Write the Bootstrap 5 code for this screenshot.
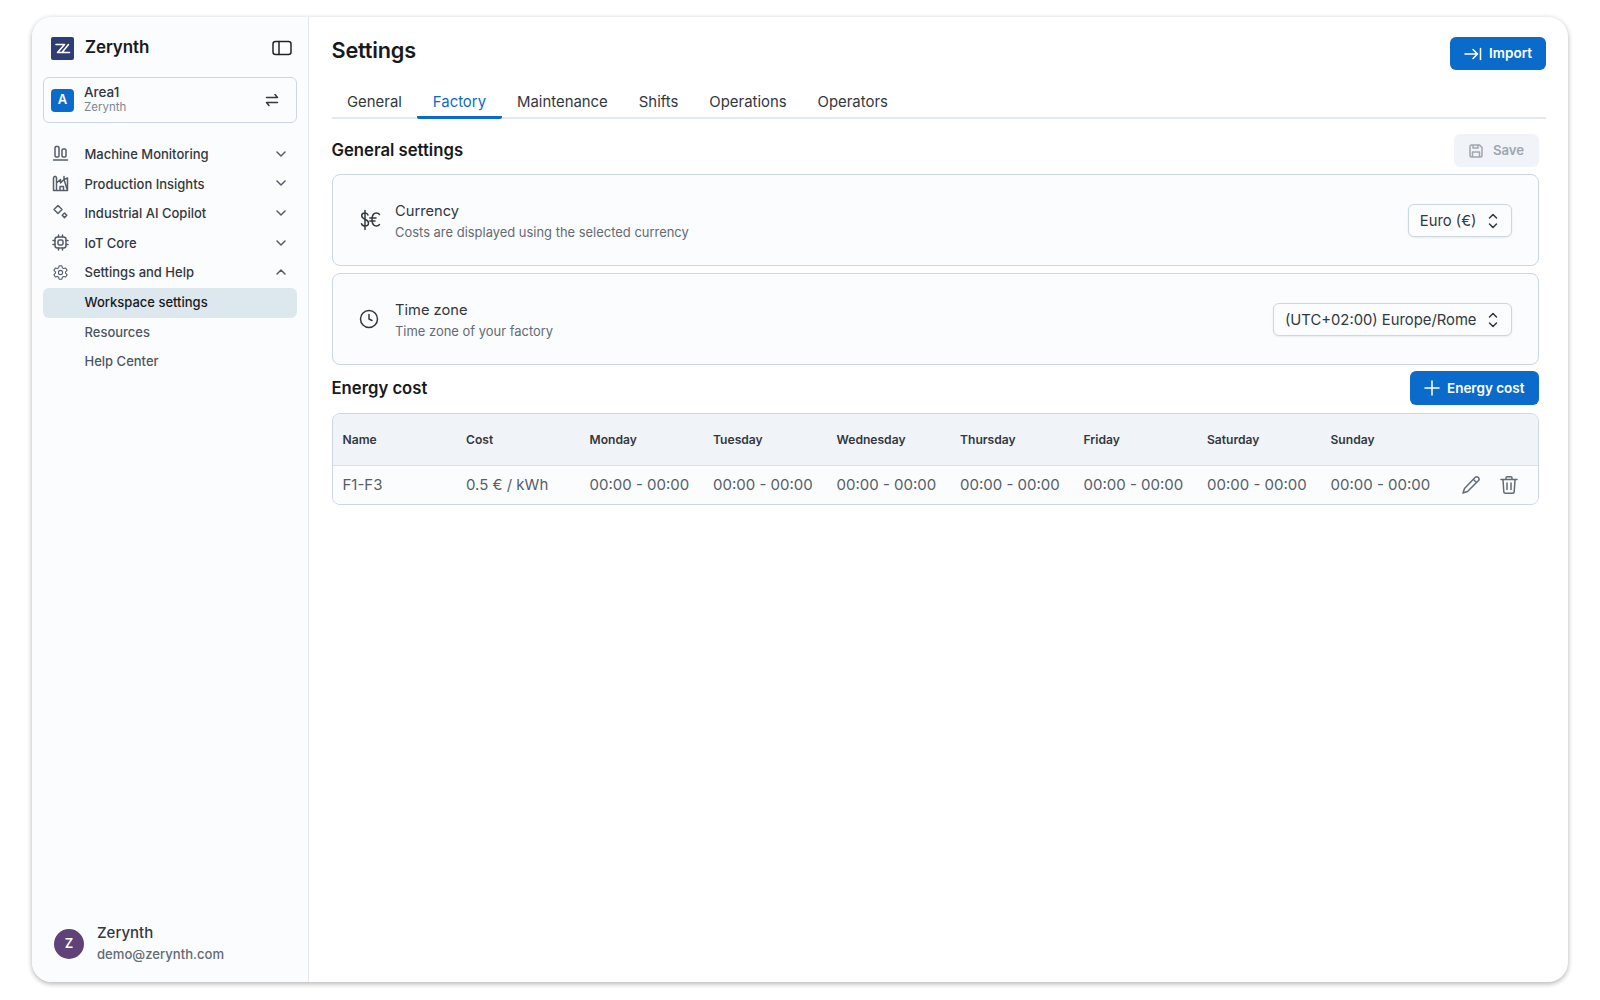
<!DOCTYPE html>
<html lang="en"><head><meta charset="utf-8"><title>Settings</title>
<link href="https://cdn.jsdelivr.net/npm/bootstrap@5.3.0/dist/css/bootstrap.min.css" rel="stylesheet">
<style>
html,body{height:100%;overflow:hidden}
body{background:#fff;font-family:Inter,"Liberation Sans",sans-serif;color:#32383e;padding:17px 32px 18px}
svg{display:block;flex:none;fill:none;stroke:currentColor;stroke-width:1.5;stroke-linecap:round;stroke-linejoin:round}
.app-frame{height:965px;border-radius:20px;box-shadow:0 2px 5px rgba(21,21,21,.28),0 0 6px rgba(21,21,21,.06);overflow:hidden;background:#fff}
.side-pane{width:277px;flex:none;background:#fbfcfe;border-right:1px solid #e4e9f0;padding:20px 11px 18px}
.brand-name{font-size:17px;font-weight:600;color:#171a1c;letter-spacing:-.1px}
.brand-row{height:22px;padding:0 5px 0 8px;margin-bottom:18px}
.brand-row .brand-name{margin-left:11px}
.area-box{height:46px;border:1px solid #cdd7e1;border-radius:6px;padding:0 17px 0 7px;margin-bottom:17px;background:#fbfcfe}
.area-mark{width:23px;height:23px;border-radius:4px;background:#0b6bcb;color:#fff;font-size:13px;font-weight:600}
.area-text{margin-left:10px}
.area-name{font-size:13.500px;line-height:15px;color:#32383e;font-weight:500;margin-top:-2px}
.area-sub{font-size:11.500px;line-height:14px;color:#7b8794}
.menu-row{height:29.600px;padding:0 11px 0 9px;font-size:13px;font-weight:500;color:#32383e;border-radius:6px;gap:15.500px;text-decoration:none}
.menu-row .menu-label{flex:1}
.menu-row svg{color:#555e68;margin-top:-2px}
.menu-sub{padding-left:41.500px;color:#4d5762}
.menu-on{background:#dde7ee;color:#171a1c}
.user-row{padding:0 11px;gap:13px}
.user-mark{width:30px;height:30px;border-radius:50%;background:#5f4278;color:#fff;font-size:13px;font-weight:600}
.user-name{font-size:15px;font-weight:500;line-height:20px;color:#32383e;margin-bottom:1px}
.user-mail{font-size:13.100px;font-weight:500;line-height:20px;color:#636b74}
.main-pane{padding:19px 22px 0 22.500px}
.page-title{font-size:21.700px;font-weight:600;color:#171a1c;margin:0 0 6px;letter-spacing:-.2px}
.head-row{height:34px;margin-bottom:14px}
.btn.btn-fill{background:#0b6bcb;border:0;color:#fff;font-size:13.500px;font-weight:600;border-radius:6px;height:33.500px;padding:0 14px;gap:7px}
.head-row .btn-fill{margin-top:1px}
.nav.nav-tabs.tab-strip{border-bottom:2px solid #e4e9f0;height:34.500px;gap:0}
.tab-strip .nav-link{border:0;color:#32383e;font-size:14.900px;padding:7px 15.500px 5px;height:34.500px;background:none;margin:0;border-radius:0;line-height:22px}
.tab-strip .nav-link.active{color:#0b6bcb;background:none;border-bottom:3px solid #0b6bcb;border-radius:2px}
.body-col{padding-right:7.500px}
.sec-title{font-size:16.700px;font-weight:600;color:#171a1c;margin:0}
.sec-row-a{height:33px;margin-top:15px;margin-bottom:7px}
.btn.btn-mute{background:#f0f4f8;border:0;color:#9fa6ad;font-size:13.200px;font-weight:600;height:33px;width:85px;border-radius:6px;gap:10px;opacity:1;padding:2px 0 0 1px}
.card.set-panel{height:92px;border:1px solid #cdd7e1;border-radius:8px;background:#fbfcfe;padding:0 26px 0 25px;margin-bottom:7px}
.set-text{padding-top:4px}
.set-title{font-size:14.700px;line-height:20px;color:#32383e}
.set-sub{font-size:12.950px;line-height:20px;color:#636b74;margin-top:1px}
.icon-slot{width:37.500px}
.pick-box{height:33px;border:1px solid #cdd7e1;border-radius:6px;background:#fbfcfe;box-shadow:0 1px 2px rgba(21,21,21,.08);font-size:14.800px;color:#32383e;padding:1px 13px 0 11px;gap:11px;margin-top:2px}
.sec-row-b{height:33px;margin-top:1px;margin-bottom:8px}
.data-wrap{border:1px solid #cdd7e1;border-radius:8px;overflow:hidden;background:#fbfcfe}
.table.data-grid{table-layout:fixed;margin:0;--bs-table-bg:transparent;width:100%}
.data-grid th{background:#f0f4f8;font-size:12.100px;font-weight:600;color:#32383e;height:52px;vertical-align:middle;padding:2px 0 0 10px;border-bottom:1px solid #dde2e8}
.data-grid td{font-size:15px;color:#555e68;height:38px;vertical-align:middle;padding:0 0 0 10px;border:0;white-space:nowrap;background:#fbfcfe}
.data-grid .col-day{width:123.500px}
.act-set{gap:18px;padding-left:7px;color:#636b74}
</style></head><body>
<div class="app-frame d-flex">
<aside class="side-pane d-flex flex-column">
 <div class="brand-row d-flex align-items-center">
  <svg width="23" height="23" viewBox="0 0 23 23" style="stroke:none"><rect width="23" height="23" rx="2" fill="#2c3e75"/><path d="M5 7.500h8.500L6.500 15.500h5M11 15.500l6.500-8M11.500 15.500h7" stroke="#fff" stroke-width="1.6" fill="none"/></svg>
  <span class="brand-name flex-grow-1">Zerynth</span>
  <svg width="20" height="16" viewBox="0 0 20 16" class="text-dark"><rect x="1" y="1.500" width="18" height="13" rx="2.500"/><path d="M7 1.500v13"/></svg>
 </div>
 <div class="area-box d-flex align-items-center">
  <span class="area-mark d-flex align-items-center justify-content-center">A</span>
  <div class="area-text flex-grow-1"><div class="area-name">Area1</div><div class="area-sub">Zerynth</div></div>
  <svg width="14" height="14" viewBox="0 0 14 14" stroke-width="1.100"><path d="M1.500 4.500h11M10 1.500l2.500 3M12.500 9.500h-11M4 12.500l-2.500-3"/></svg>
 </div>
 <a class="menu-row d-flex align-items-center" href="#"><svg width="17" height="17" viewBox="0 0 17 17" stroke-width="1"><rect x="3" y="1.500" width="4" height="10.500" rx="1.200"/><rect x="10" y="4" width="4" height="8" rx="1.200"/><path d="M1.500 15h14"/></svg><span class="menu-label">Machine Monitoring</span><svg width="10" height="6" viewBox="0 0 10 6"><path d="M1 1l4 4 4-4"/></svg></a>
 <a class="menu-row d-flex align-items-center" href="#"><svg width="17" height="17" viewBox="0 0 17 17" stroke-width="1"><path d="M1.500 15.500V3l.7-1.500h1.600L4.500 3v5l4-3.500V8l3.500-3.500V1.500M12 4.500 15.500 3v12.500zM4.500 8v7.500M8 15.500v-4h3.500v4M1.500 15.500h14"/></svg><span class="menu-label">Production Insights</span><svg width="10" height="6" viewBox="0 0 10 6"><path d="M1 1l4 4 4-4"/></svg></a>
 <a class="menu-row d-flex align-items-center" href="#"><svg width="17" height="17" viewBox="0 0 17 17" stroke-width="1.100"><path d="M6 1.500 10 5.500 6 9.500 2 5.500zM12.500 9l2.300 2.300-2.300 2.300-2.300-2.300z"/></svg><span class="menu-label">Industrial AI Copilot</span><svg width="10" height="6" viewBox="0 0 10 6"><path d="M1 1l4 4 4-4"/></svg></a>
 <a class="menu-row d-flex align-items-center" href="#"><svg width="17" height="17" viewBox="0 0 17 17" stroke-width="1"><rect x="3" y="3" width="11" height="11" rx="2.500"/><rect x="6" y="6" width="5" height="5" rx="1.500"/><path d="M1 6.500h2M1 10.500h2M14 6.500h2M14 10.500h2M6.500 1v2M10.500 1v2M6.500 14v2M10.500 14v2"/></svg><span class="menu-label">IoT Core</span><svg width="10" height="6" viewBox="0 0 10 6"><path d="M1 1l4 4 4-4"/></svg></a>
 <a class="menu-row d-flex align-items-center" href="#"><svg width="17" height="17" viewBox="0 0 24 24" stroke-width="1.400"><path d="M10 2.500h4l.6 2.900 1.900 1.100 2.800-.9 2 3.400-2.200 2v2l2.200 2-2 3.400-2.800-.9-1.900 1.100-.6 2.900h-4l-.6-2.900-1.900-1.100-2.800.9-2-3.400 2.200-2v-2l-2.200-2 2-3.400 2.800.9 1.900-1.100z"/><circle cx="12" cy="12" r="3"/></svg><span class="menu-label">Settings and Help</span><svg width="10" height="6" viewBox="0 0 10 6"><path d="M1 5l4-4 4 4"/></svg></a>
 <a class="menu-row menu-sub menu-on d-flex align-items-center" href="#">Workspace settings</a>
 <a class="menu-row menu-sub d-flex align-items-center" href="#">Resources</a>
 <a class="menu-row menu-sub d-flex align-items-center" href="#">Help Center</a>
 <div class="user-row d-flex align-items-center mt-auto">
  <span class="user-mark d-flex align-items-center justify-content-center">Z</span>
  <div><div class="user-name">Zerynth</div><div class="user-mail">demo@zerynth.com</div></div>
 </div>
</aside>
<main class="main-pane flex-grow-1">
 <div class="head-row d-flex justify-content-between align-items-center">
  <h1 class="page-title">Settings</h1>
  <button class="btn btn-fill d-flex align-items-center"><svg width="18" height="14" viewBox="0 0 18 14" stroke-width="1.200"><path d="M1 7h12M9 2.500 13.500 7 9 11.500M16.500 1.500v11"/></svg>Import</button>
 </div>
 <ul class="nav nav-tabs tab-strip">
  <li class="nav-item"><a class="nav-link" href="#">General</a></li>
  <li class="nav-item"><a class="nav-link active" href="#">Factory</a></li>
  <li class="nav-item"><a class="nav-link" href="#">Maintenance</a></li>
  <li class="nav-item"><a class="nav-link" href="#">Shifts</a></li>
  <li class="nav-item"><a class="nav-link" href="#">Operations</a></li>
  <li class="nav-item"><a class="nav-link" href="#">Operators</a></li>
 </ul>
 <div class="body-col">
  <div class="sec-row-a d-flex justify-content-between align-items-center">
   <h2 class="sec-title">General settings</h2>
   <button class="btn btn-mute d-flex align-items-center justify-content-center" disabled><svg width="14" height="14" viewBox="0 0 14 14" stroke-width="1.100"><path d="M1 2.500A1.500 1.500 0 0 1 2.500 1h8L13 3.500v8a1.500 1.500 0 0 1-1.500 1.500h-9A1.500 1.500 0 0 1 1 11.500zM4 1v3h5V1M3.500 13V8h7v5"/></svg>Save</button>
  </div>
  <div class="card set-panel flex-row align-items-center">
   <div class="icon-slot"><svg width="24" height="24" viewBox="0 0 24 24" stroke-width="1.200"><path d="M10 7c-.5-1.500-1.500-2-3-2-2 0-3.300 1-3.300 2.700C3.700 12 10.500 10.500 10.500 15c0 1.800-1.500 3-3.500 3-1.700 0-3-.8-3.500-2.300M7 2.500v19M21.500 6.500c-.8-1-1.800-1.500-3-1.500-3 0-4.500 3-4.500 6.500s1.500 6.500 4.500 6.500c1.200 0 2.200-.5 3-1.500M11.800 10h6.200M11.800 13h5.200"/></svg></div>
   <div class="set-text flex-grow-1"><div class="set-title">Currency</div><div class="set-sub">Costs are displayed using the selected currency</div></div>
   <div class="pick-box d-flex align-items-center">Euro (€)<svg width="10" height="16" viewBox="0 0 10 16" stroke-width="1.300"><path d="M1.500 5 5 1.500 8.500 5M1.500 11 5 14.500 8.500 11"/></svg></div>
  </div>
  <div class="card set-panel flex-row align-items-center">
   <div class="icon-slot"><svg width="22" height="22" viewBox="0 0 22 22" stroke-width="1.500"><circle cx="11" cy="11" r="8.500"/><path d="M11 6.500V11l3 1.500"/></svg></div>
   <div class="set-text flex-grow-1"><div class="set-title">Time zone</div><div class="set-sub">Time zone of your factory</div></div>
   <div class="pick-box d-flex align-items-center">(UTC+02:00) Europe/Rome<svg width="10" height="16" viewBox="0 0 10 16" stroke-width="1.300"><path d="M1.500 5 5 1.500 8.500 5M1.500 11 5 14.500 8.500 11"/></svg></div>
  </div>
  <div class="sec-row-b d-flex justify-content-between align-items-center">
   <h2 class="sec-title">Energy cost</h2>
   <button class="btn btn-fill d-flex align-items-center"><svg width="16" height="16" viewBox="0 0 16 16" stroke-width="1.300"><path d="M8 1v14M1 8h14"/></svg>Energy cost</button>
  </div>
  <div class="data-wrap">
   <table class="table data-grid">
    <thead><tr><th class="col-day">Name</th><th class="col-day">Cost</th><th class="col-day">Monday</th><th class="col-day">Tuesday</th><th class="col-day">Wednesday</th><th class="col-day">Thursday</th><th class="col-day">Friday</th><th class="col-day">Saturday</th><th class="col-day">Sunday</th><th></th></tr></thead>
    <tbody><tr><td>F1-F3</td><td>0.5 € / kWh</td><td>00:00 - 00:00</td><td>00:00 - 00:00</td><td>00:00 - 00:00</td><td>00:00 - 00:00</td><td>00:00 - 00:00</td><td>00:00 - 00:00</td><td>00:00 - 00:00</td>
    <td><div class="act-set d-flex align-items-center"><svg width="20" height="20" viewBox="0 0 20 20" stroke-width="1.200"><path d="M14 2.500a2 2 0 0 1 3.300 3.300L6.500 16.500 2 18l1.500-4.500zM12.500 4.500l3 3"/></svg><svg width="20" height="20" viewBox="0 0 20 20" stroke-width="1.200"><path d="M2 4.500h16M7 4.500V3a1.300 1.300 0 0 1 1.300-1.300h3.400A1.300 1.300 0 0 1 13 3v1.500M4 4.500l.8 12.300A1.500 1.500 0 0 0 6.300 18.300h7.400a1.500 1.500 0 0 0 1.500-1.500L16 4.500M8 8v6.500M12 8v6.500"/></svg></div></td></tr></tbody>
   </table>
  </div>
 </div>
</main>
</div>
<script src="https://cdn.jsdelivr.net/npm/bootstrap@5.3.0/dist/js/bootstrap.bundle.min.js"></script>
</body></html>
